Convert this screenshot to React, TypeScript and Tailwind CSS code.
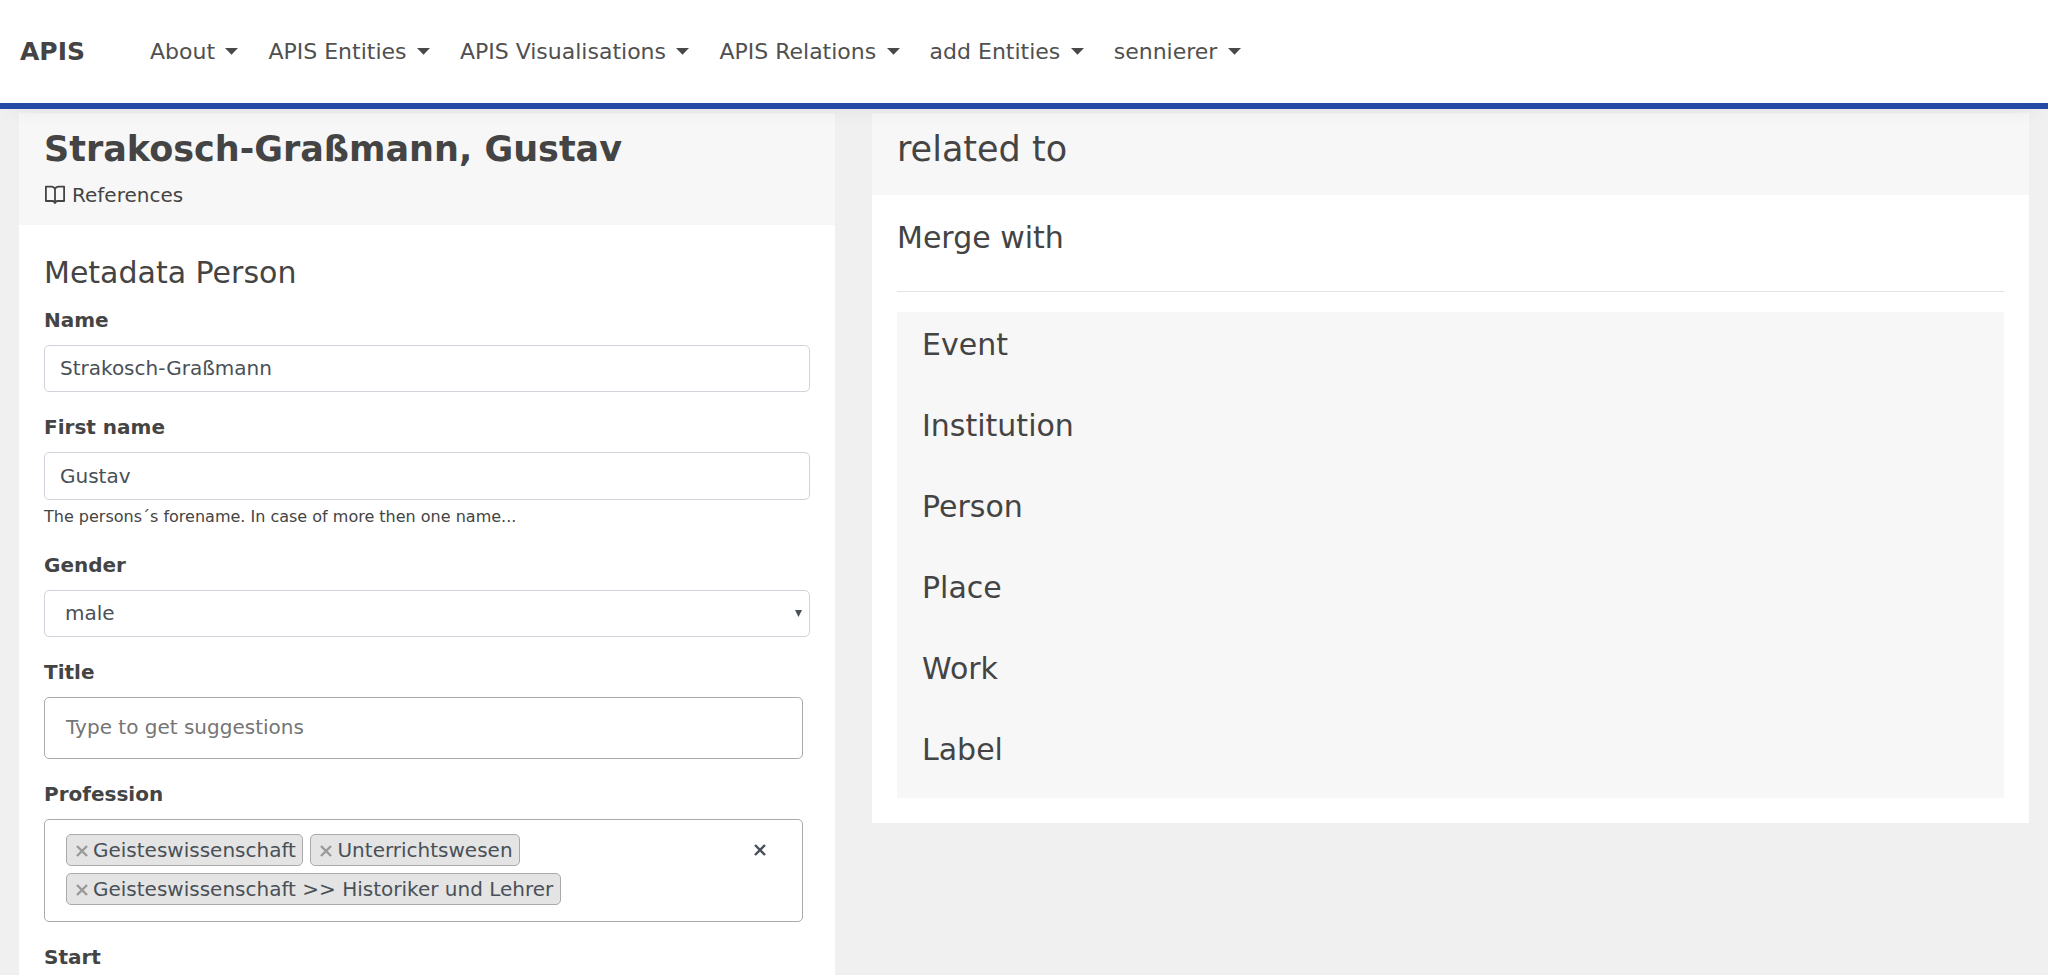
import type { ReactNode } from "react";

const navItems = [
  "About",
  "APIS Entities",
  "APIS Visualisations",
  "APIS Relations",
  "add Entities",
  "sennierer",
];

const relations = ["Event", "Institution", "Person", "Place", "Work", "Label"];

function Caret() {
  return (
    <svg className="ml-[10.4px] h-[7px] w-[13px] shrink-0" viewBox="0 0 13 7">
      <path d="M0 0h13L6.5 6.8z" fill="#494949" />
    </svg>
  );
}

function Navbar() {
  return (
    <nav className="relative z-10 flex h-[109px] shrink-0 items-center border-b-[6px] border-[#254aa5] bg-white pl-5 shadow-[0_10px_20px_-12px_rgba(0,0,0,0.09)]">
      <a className="w-[130px] text-[25px] leading-[30px] font-bold">APIS</a>
      <ul className="flex items-center gap-[30px] text-[22px] leading-[30px] text-[#505050]">
        {navItems.map((item) => (
          <li key={item} className="flex items-center whitespace-nowrap">
            {item}
            <Caret />
          </li>
        ))}
      </ul>
    </nav>
  );
}

function Field({ label, children }: { label: string; children?: ReactNode }) {
  return (
    <div className="mb-5">
      <div className="mb-[10px] leading-[30px] font-bold">{label}</div>
      {children}
    </div>
  );
}

function TextBox({ value, className }: { value: string; className: string }) {
  return (
    <input
      readOnly
      value={value}
      className={`block w-full rounded-[5px] border border-[#ced4da] bg-white px-[15px] text-[#495057] ${className}`}
    />
  );
}

function Cross({ className }: { className: string }) {
  return (
    <svg className={className} viewBox="0 0 12 12" fill="none" strokeWidth="2.4">
      <path d="M1 1l10 10M11 1L1 11" stroke="currentColor" />
    </svg>
  );
}

function Tag({ text }: { text: string }) {
  return (
    <span className="flex h-8 items-center rounded-[5px] border border-[#aaa] bg-[#e4e4e4] pr-[6.5px] pl-[9px] whitespace-nowrap text-[#495057]">
      <Cross className="mt-px mr-[5px] h-3 w-3 text-[#999]" />
      {text}
    </span>
  );
}

export default function App() {
  return (
    <div className="flex h-[975px] w-[2048px] flex-col overflow-hidden bg-[#f0f0f0] font-['DejaVu_Sans',sans-serif] text-[20px] leading-[30px] text-[#444]">
      <Navbar />
      <main className="flex min-h-0 flex-1 items-start gap-[37px] pt-1 pl-[19px]">
        <section className="h-[900px] w-[816px] shrink-0 bg-white">
          <header className="bg-[#f7f7f7] px-[25px] py-[15px]">
            <h1 className="mb-[10px] text-[35px] leading-[42px] font-bold">Strakosch-Graßmann, Gustav</h1>
            <a className="flex items-center">
              <svg
                className="mr-[7px] h-[22px] w-[21px]"
                viewBox="0 0 21 22"
                fill="none"
                stroke="#444"
                strokeWidth="1.8"
                strokeLinejoin="round"
              >
                <path d="M11 5C10.400 3.400 9 2.600 7.200 2.600H1.900V17h6.300c1.600 0 2.800.9 2.800 2.700M11 5c.6-1.600 2-2.400 3.800-2.400h5.300V17h-6.300c-1.600 0-2.800.9-2.800 2.700M11 5v14.700" />
              </svg>
              References
            </a>
          </header>
          <div className="px-[25px] pt-[30px]">
            <h2 className="mb-[14px] text-[30px] leading-[36px]">Metadata Person</h2>
            <Field label="Name">
              <TextBox value="Strakosch-Graßmann" className="h-[47px] pb-[2px]" />
            </Field>
            <Field label="First name">
              <TextBox value="Gustav" className="h-12" />
              <p className="mt-[5px] mb-[21px] text-[16px] leading-[24px]">
                The persons´s forename. In case of more then one name...
              </p>
            </Field>
            <Field label="Gender">
              <div className="flex h-[47px] items-center justify-between rounded-[5px] border border-[#ced4da] pr-[7px] pb-px pl-5 text-[#495057]">
                male
                <svg className="h-[7px] w-[7px]" viewBox="0 0 7 7">
                  <path d="M0 0h7L3.500 7z" fill="#495057" />
                </svg>
              </div>
            </Field>
            <Field label="Title">
              <div className="h-[62px] w-[759px] rounded-[5px] border border-[#aaa] px-[21px] py-[14px] text-[#757575]">
                Type to get suggestions
              </div>
            </Field>
            <Field label="Profession">
              <div className="flex h-[103px] w-[759px] items-start justify-between rounded-[5px] border border-[#aaa] pt-[14px] pr-[36px] pl-[21px]">
                <div className="flex flex-wrap gap-[7px]">
                  <Tag text="Geisteswissenschaft" />
                  <Tag text="Unterrichtswesen" />
                  <Tag text="Geisteswissenschaft >> Historiker und Lehrer" />
                </div>
                <Cross className="mt-[10px] h-3 w-3 shrink-0 text-[#495057]" />
              </div>
            </Field>
            <Field label="Start" />
          </div>
        </section>
        <section className="w-[1157px] shrink-0 bg-white">
          <header className="h-[82px] bg-[#f7f7f7] px-[25px] pt-[15px]">
            <h2 className="text-[35px] leading-[42px]">related to</h2>
          </header>
          <div className="p-[25px]">
            <h3 className="text-[30px] leading-[36px]">Merge with</h3>
            <hr className="mt-[35px] mb-5 border-[#e3e3e3]" />
            <ul className="bg-[#f7f7f7]">
              {relations.map((name) => (
                <li key={name} className="h-[81px] px-[25px] pt-[15px] text-[30px] leading-[36px]">
                  {name}
                </li>
              ))}
            </ul>
          </div>
        </section>
      </main>
    </div>
  );
}
